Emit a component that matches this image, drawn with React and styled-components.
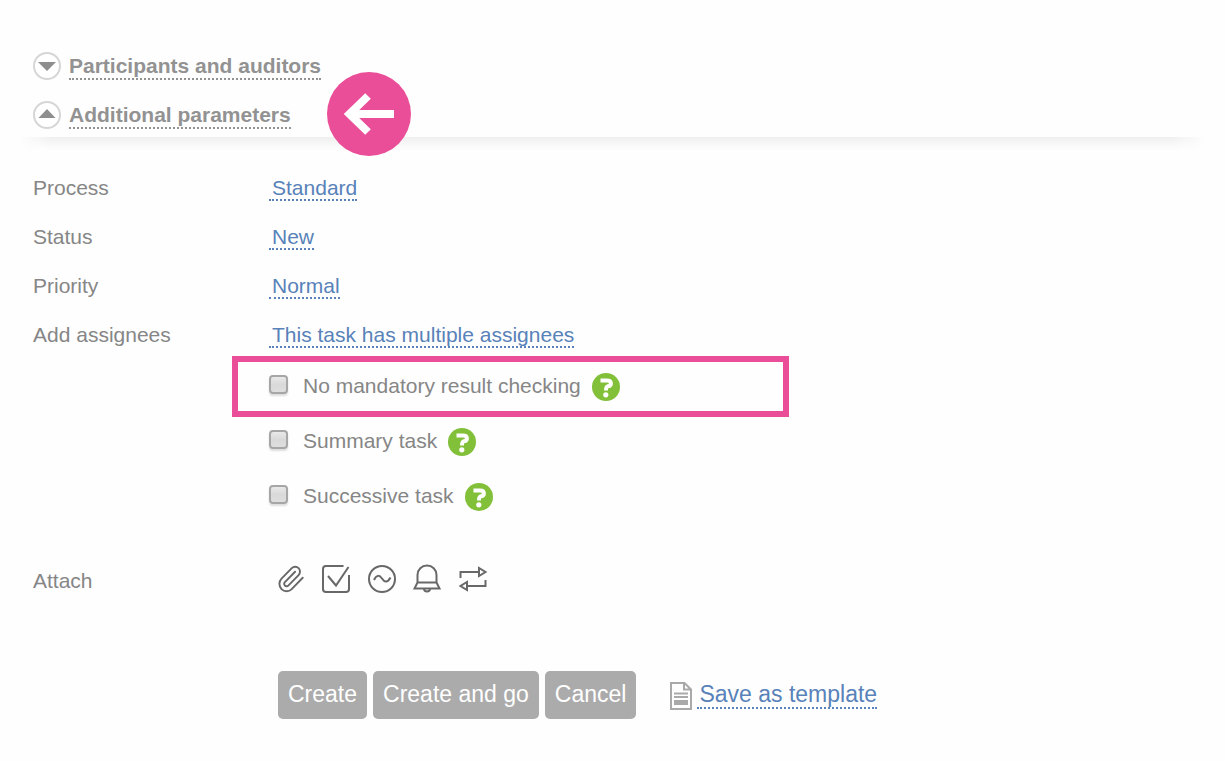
import React, { useState } from "react";
import styled, { createGlobalStyle } from "styled-components";

const GlobalStyle = createGlobalStyle`
  * {
    box-sizing: border-box;
  }
  body {
    margin: 0;
    background-color: #fefefe;
    color: #868686;
    font-family: "Liberation Sans", Arial, sans-serif;
    font-size: 21px;
    line-height: 22px;
  }
  button {
    font: inherit;
    cursor: pointer;
  }
`;

const Page = styled.main`
  padding: 41px 24px;
`;

const SectionRow = styled.div`
  display: flex;
  align-items: center;
  gap: 8px;
  height: 49px;
  padding-left: 9px;
`;

const Toggle = styled.button`
  display: flex;
  align-items: center;
  gap: 8px;
  padding: 0;
  border: none;
  background: none;
  color: #929292;
  font-weight: bold;
`;

const SectionTitle = styled.span`
  margin-top: 3px;
  border-bottom: 2px dotted #929292;
  line-height: 24px;
`;

const Pointer = styled.span`
  position: relative;
  width: 84px;
  margin-left: 28px;
`;

const PointerIcon = styled.svg`
  position: absolute;
  top: -43px;
  left: 0;
  z-index: 1;
`;

const Shadow = styled.div`
  height: 14px;
  margin: -2px -4px 0;
  background: linear-gradient(#efefef, #fafafa 65%, #fefefe);
  mask-image: linear-gradient(to right, transparent, #000 32px, #000 calc(100% - 32px), transparent);
`;

const Form = styled.form`
  padding: 12px 9px 0;
`;

const Row = styled.div`
  display: grid;
  grid-template-columns: 236px 1fr;
  align-items: baseline;
  padding: 14px 0 11px;
`;

const Value = styled.button`
  justify-self: start;
  padding: 0 0 0 3px;
  border: none;
  border-bottom: 2px dotted #5882b9;
  background: none;
  color: #5882b9;
`;

const Options = styled.div`
  margin-left: 236px;
`;

const Option = styled.div`
  position: relative;
  display: flex;
  align-items: center;
  height: 55px;
`;

const Highlight = styled.span`
  position: absolute;
  top: -3px;
  left: -37px;
  width: 557px;
  height: 61px;
  border: 6px solid #ea4e98;
  pointer-events: none;
`;

const OptionLabel = styled.label`
  display: flex;
  align-items: center;
  gap: 15px;
  padding-bottom: 2px;
`;

const Checkbox = styled.input`
  appearance: none;
  width: 19px;
  height: 19px;
  margin: 0 0 3px;
  border: 2px solid #a6a6a6;
  border-radius: 4px;
  background: linear-gradient(#e9e9e9, #d9d9d9 50%, #dedede);
  box-shadow: 0 2px 2px #dddddd;

  &:checked {
    background: #8a8a8a;
  }
`;

const HelpButton = styled.button`
  display: flex;
  margin-left: 11px;
  padding: 0;
  border: none;
  background: none;
`;

const AttachRow = styled(Row)`
  align-items: center;
  margin-top: 31px;
  padding: 8px 0;
`;

const AttachLabel = styled.span`
  padding-top: 4px;
`;

const AttachList = styled.div`
  display: flex;
  align-items: center;
  gap: 13px;
  padding-left: 7px;
`;

const AttachButton = styled.button`
  display: flex;
  padding: 0;
  border: none;
  background: none;
  color: #686868;
`;

const Actions = styled.div`
  display: flex;
  align-items: center;
  gap: 6px;
  margin: 68px 0 0 245px;
  font-size: 23px;
  line-height: 24px;
`;

const ActionButton = styled.button`
  height: 48px;
  padding: 0 10px 2px;
  border: none;
  border-radius: 5px;
  background-color: #ababab;
  color: #fff;
`;

const TemplateLink = styled.a`
  display: flex;
  align-items: center;
  gap: 5px;
  margin-left: 28px;
  color: #5882b9;
  text-decoration: none;
`;

const TemplateIcon = styled.svg`
  margin-top: 2px;
`;

const TemplateText = styled.span`
  padding-left: 2px;
  border-bottom: 2px dotted #5882b9;
  line-height: 26px;
`;

const parameters = [
  { name: "Process", value: "Standard" },
  { name: "Status", value: "New" },
  { name: "Priority", value: "Normal" },
  { name: "Add assignees", value: "This task has multiple assignees" },
];

const options = [
  { id: "no-check", text: "No mandatory result checking", highlighted: true },
  { id: "summary", text: "Summary task" },
  { id: "successive", text: "Successive task" },
];

const attachments = [
  {
    name: "File",
    drawing: (
      <path
        d="M21.440 11.050l-9.190 9.190a6 6 0 0 1-8.490-8.490l8.570-8.570A4 4 0 1 1 18 8.840l-8.590 8.570a2 2 0 0 1-2.830-2.830l8.490-8.480"
        transform="translate(0 0.200) scale(1.200 1.230)"
        strokeWidth="1.600"
        strokeLinecap="round"
      />
    ),
  },
  {
    name: "Checklist",
    drawing: (
      <>
        <path d="M21.500 2 H4 Q1 2 1 5 V25 Q1 28 4 28 H24 Q27 28 27 25 V11" />
        <path d="M6 12 L14 21.500 L26.500 3" />
      </>
    ),
  },
  {
    name: "Analytics",
    drawing: (
      <>
        <circle cx="15" cy="15" r="13" />
        <path d="M7 16 C9.500 10.500 12.500 11 15 14.500 C17.500 18.500 20.500 19 23.500 13.500" />
      </>
    ),
  },
  {
    name: "Reminder",
    drawing: (
      <>
        <path d="M5.500 18.500 V11 A9.500 9.500 0 0 1 24.500 11 V18.500 L27.500 24.500 H2.500 L5.500 18.500 H24.500" />
        <path d="M12 24.500 A3 3 0 0 0 18 24.500" />
      </>
    ),
  },
  {
    name: "Repeat",
    drawing: (
      <>
        <path d="M3.500 14 V8 H22 M22 4 V12 L28.500 8 Z" />
        <path d="M28.500 16 V22 H10 M10 18 V26 L3.500 22 Z" />
      </>
    ),
  },
];

function SectionToggle({ title, open, onClick }) {
  return (
    <Toggle type="button" aria-expanded={open} onClick={onClick}>
      <svg width="28" height="28" viewBox="0 0 28 28" aria-hidden="true">
        <circle cx="14" cy="14" r="13" fill="#fff" stroke="#d6d6d6" strokeWidth="2" />
        <path d={open ? "M5.500 17 L14 8 L22.500 17 Z" : "M5 10 L14 19 L23 10 Z"} fill="#8e8e8e" />
      </svg>
      <SectionTitle>{title}</SectionTitle>
    </Toggle>
  );
}

function HelpIcon() {
  return (
    <svg width="28" height="28" viewBox="0 0 28 28" fill="none" aria-hidden="true">
      <circle cx="14" cy="14" r="14" fill="#82c03a" />
      <path d="M8.500 7.500 H15 C20 7.500 20 12.500 16 13.300 C14.500 13.700 14 14.500 14 17.500" stroke="#fff" strokeWidth="4" />
      <circle cx="13.800" cy="21.800" r="2.600" fill="#fff" />
    </svg>
  );
}

function App() {
  const [participantsOpen, setParticipantsOpen] = useState(false);
  const [parametersOpen, setParametersOpen] = useState(true);

  return (
    <>
      <GlobalStyle />
      <Page>
        <SectionRow>
          <SectionToggle
            title="Participants and auditors"
            open={participantsOpen}
            onClick={() => setParticipantsOpen(!participantsOpen)}
          />
        </SectionRow>
        <SectionRow>
          <SectionToggle
            title="Additional parameters"
            open={parametersOpen}
            onClick={() => setParametersOpen(!parametersOpen)}
          />
          <Pointer>
            <PointerIcon width="84" height="84" viewBox="0 0 84 84" aria-hidden="true">
              <circle cx="42" cy="42" r="42" fill="#ea4e98" />
              <path d="M67 42 H24 M41 24 L22.500 42 L41 60" fill="none" stroke="#fff" strokeWidth="8" />
            </PointerIcon>
          </Pointer>
        </SectionRow>
        <Shadow />
        <Form onSubmit={(event) => event.preventDefault()}>
          {parametersOpen && (
            <>
              {parameters.map((item) => (
                <Row key={item.name}>
                  <span>{item.name}</span>
                  <Value type="button">{item.value}</Value>
                </Row>
              ))}
              <Options>
                {options.map((option) => (
                  <Option key={option.id}>
                    {option.highlighted && <Highlight />}
                    <OptionLabel htmlFor={option.id}>
                      <Checkbox type="checkbox" id={option.id} />
                      {option.text}
                    </OptionLabel>
                    <HelpButton type="button" aria-label="Help">
                      <HelpIcon />
                    </HelpButton>
                  </Option>
                ))}
              </Options>
            </>
          )}
          <AttachRow>
            <AttachLabel>Attach</AttachLabel>
            <AttachList>
              {attachments.map((item) => (
                <AttachButton key={item.name} type="button" aria-label={item.name}>
                  <svg width="32" height="32" viewBox="-1 -1 32 32" fill="none" stroke="currentColor" strokeWidth="2">
                    {item.drawing}
                  </svg>
                </AttachButton>
              ))}
            </AttachList>
          </AttachRow>
          <Actions>
            <ActionButton type="submit">Create</ActionButton>
            <ActionButton type="button">Create and go</ActionButton>
            <ActionButton type="button">Cancel</ActionButton>
            <TemplateLink href="#template">
              <TemplateIcon width="22" height="28" viewBox="0 0 22 28" fill="none" stroke="#a9a9a9" strokeWidth="2" aria-hidden="true">
                <path d="M1 1 H14.500 L21 7.500 V27 H1 Z M14 1 V7.500 H21" />
                <path d="M4 11.500 H18 M4 15 H18" />
                <path d="M4 20.500 H18" strokeWidth="5" />
              </TemplateIcon>
              <TemplateText>Save as template</TemplateText>
            </TemplateLink>
          </Actions>
        </Form>
      </Page>
    </>
  );
}

export default App;
